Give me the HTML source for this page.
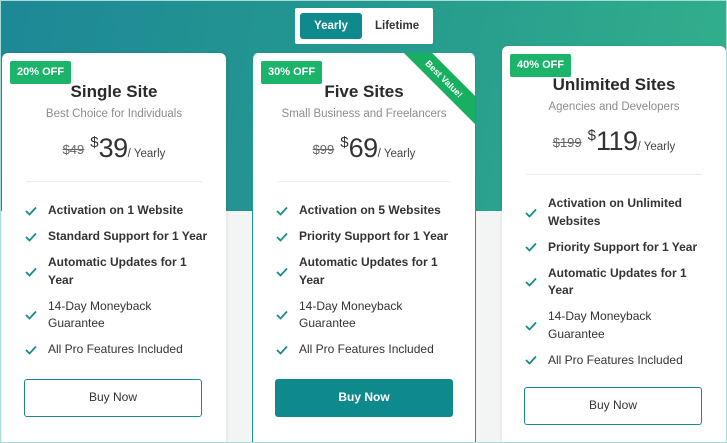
<!DOCTYPE html>
<html><head><style>
*{margin:0;padding:0;box-sizing:border-box}
html,body{width:727px;height:443px;overflow:hidden}
body{font-family:"Liberation Sans",sans-serif;background:#f3f5f5;position:relative}
.frame{position:absolute;left:0;top:0;width:727px;height:443px;border:1.5px solid #a8dcd4;z-index:10;pointer-events:none}
.bg{position:absolute;left:0;top:0;width:727px;height:211px;background:linear-gradient(100deg,#1d8896 0%,#25998f 50%,#32b08b 100%)}
.tog{position:absolute;left:295px;top:8px;width:138px;height:36px;background:#fff;border-radius:2px}
.tog .y{position:absolute;left:5px;top:5px;width:62px;height:26px;background:#0f8a8c;border-radius:3px;color:#fff;font-size:11.5px;font-weight:bold;text-align:center;line-height:26px}
.tog .l{position:absolute;left:80px;top:5px;line-height:26px;font-size:11.5px;font-weight:bold;color:#333}
.card{position:absolute;width:224px;background:#fff;border-radius:6px 6px 0 0;overflow:hidden}
.c1{left:2px;top:53px;height:390px;box-shadow:1px 0 3px rgba(0,0,0,.08)}
.c2{left:252px;top:53px;height:390px;border:1.5px solid #1a9a95;border-top:none;border-bottom:none}
.c3{left:502px;top:46px;height:397px;box-shadow:-1px 0 3px rgba(0,0,0,.06)}
.badge{position:absolute;left:8px;top:8px;background:#1cb46a;color:#fff;font-size:11px;font-weight:bold;padding:0 7px;height:23px;line-height:23px;border-radius:2px}
h2{position:absolute;left:0;right:0;top:29px;text-align:center;font-size:17px;color:#2a2a2a}
.sub{position:absolute;left:0;right:0;top:55px;text-align:center;font-size:11.5px;color:#8c8c8c}
.price{position:absolute;left:0;right:0;top:80px;text-align:center;color:#333;white-space:nowrap}
.price s{font-size:13px;color:#666;margin-right:6px;vertical-align:3px}
.price .d{font-size:15px;vertical-align:10px}
.price b{font-weight:normal;font-size:27px;letter-spacing:-.5px}
.price i{font-style:normal;font-size:11.5px;color:#444}
.hr{position:absolute;left:24px;right:24px;top:128px;height:1px;background:#eee}
ul{position:absolute;left:22px;top:149px;list-style:none;width:195px}
li{position:relative;padding-left:24px;font-size:12px;line-height:17.5px;color:#333;margin-bottom:8.5px;white-space:nowrap}
li.bd{font-weight:bold}
li svg{position:absolute;left:1px;top:50%;margin-top:-5px}
.btn{position:absolute;left:22px;width:178px;height:38px;border:1.5px solid #1a8a8a;border-radius:3px;text-align:center;line-height:35px;font-size:12px;color:#333}
.btn.f{background:#0f8a8c;color:#fff;font-weight:bold;border-color:#0f8a8c}
.rib{position:absolute;right:-34px;top:16px;width:130px;height:20px;background:#17b060;color:#fff;font-size:9px;font-weight:bold;text-align:center;line-height:20px;transform:rotate(45deg)}
</style></head><body>
<div class="bg"></div>
<div class="tog"><div class="y">Yearly</div><div class="l">Lifetime</div></div>

<div class="card c1">
<div class="badge">20% OFF</div>
<h2>Single Site</h2>
<div class="sub">Best Choice for Individuals</div>
<div class="price"><s>$49</s><span class="d">$</span><b>39</b><i>/ Yearly</i></div>
<div class="hr"></div>
<ul>
<li class="bd"><svg width="12" height="10" viewBox="0 0 12 10"><path d="M1 5l3.5 3.5L11 1.5" fill="none" stroke="#178a8a" stroke-width="1.8"/></svg>Activation on 1 Website</li>
<li class="bd"><svg width="12" height="10" viewBox="0 0 12 10"><path d="M1 5l3.5 3.5L11 1.5" fill="none" stroke="#178a8a" stroke-width="1.8"/></svg>Standard Support for 1 Year</li>
<li class="bd"><svg width="12" height="10" viewBox="0 0 12 10"><path d="M1 5l3.5 3.5L11 1.5" fill="none" stroke="#178a8a" stroke-width="1.8"/></svg>Automatic Updates for 1<br>Year</li>
<li><svg width="12" height="10" viewBox="0 0 12 10"><path d="M1 5l3.5 3.5L11 1.5" fill="none" stroke="#178a8a" stroke-width="1.8"/></svg>14-Day Moneyback<br>Guarantee</li>
<li><svg width="12" height="10" viewBox="0 0 12 10"><path d="M1 5l3.5 3.5L11 1.5" fill="none" stroke="#178a8a" stroke-width="1.8"/></svg>All Pro Features Included</li>
</ul>
<div class="btn" style="top:326px">Buy Now</div>
</div>

<div class="card c2">
<div class="rib">Best Value!</div>
<div class="badge">30% OFF</div>
<h2>Five Sites</h2>
<div class="sub">Small Business and Freelancers</div>
<div class="price"><s>$99</s><span class="d">$</span><b>69</b><i>/ Yearly</i></div>
<div class="hr"></div>
<ul>
<li class="bd"><svg width="12" height="10" viewBox="0 0 12 10"><path d="M1 5l3.5 3.5L11 1.5" fill="none" stroke="#178a8a" stroke-width="1.8"/></svg>Activation on 5 Websites</li>
<li class="bd"><svg width="12" height="10" viewBox="0 0 12 10"><path d="M1 5l3.5 3.5L11 1.5" fill="none" stroke="#178a8a" stroke-width="1.8"/></svg>Priority Support for 1 Year</li>
<li class="bd"><svg width="12" height="10" viewBox="0 0 12 10"><path d="M1 5l3.5 3.5L11 1.5" fill="none" stroke="#178a8a" stroke-width="1.8"/></svg>Automatic Updates for 1<br>Year</li>
<li><svg width="12" height="10" viewBox="0 0 12 10"><path d="M1 5l3.5 3.5L11 1.5" fill="none" stroke="#178a8a" stroke-width="1.8"/></svg>14-Day Moneyback<br>Guarantee</li>
<li><svg width="12" height="10" viewBox="0 0 12 10"><path d="M1 5l3.5 3.5L11 1.5" fill="none" stroke="#178a8a" stroke-width="1.8"/></svg>All Pro Features Included</li>
</ul>
<div class="btn f" style="top:326px">Buy Now</div>
</div>

<div class="card c3">
<div class="badge">40% OFF</div>
<h2>Unlimited Sites</h2>
<div class="sub">Agencies and Developers</div>
<div class="price"><s>$199</s><span class="d">$</span><b>119</b><i>/ Yearly</i></div>
<div class="hr"></div>
<ul>
<li class="bd"><svg width="12" height="10" viewBox="0 0 12 10"><path d="M1 5l3.5 3.5L11 1.5" fill="none" stroke="#178a8a" stroke-width="1.8"/></svg>Activation on Unlimited<br>Websites</li>
<li class="bd"><svg width="12" height="10" viewBox="0 0 12 10"><path d="M1 5l3.5 3.5L11 1.5" fill="none" stroke="#178a8a" stroke-width="1.8"/></svg>Priority Support for 1 Year</li>
<li class="bd"><svg width="12" height="10" viewBox="0 0 12 10"><path d="M1 5l3.5 3.5L11 1.5" fill="none" stroke="#178a8a" stroke-width="1.8"/></svg>Automatic Updates for 1<br>Year</li>
<li><svg width="12" height="10" viewBox="0 0 12 10"><path d="M1 5l3.5 3.5L11 1.5" fill="none" stroke="#178a8a" stroke-width="1.8"/></svg>14-Day Moneyback<br>Guarantee</li>
<li><svg width="12" height="10" viewBox="0 0 12 10"><path d="M1 5l3.5 3.5L11 1.5" fill="none" stroke="#178a8a" stroke-width="1.8"/></svg>All Pro Features Included</li>
</ul>
<div class="btn" style="top:341px">Buy Now</div>
</div>
<div class="frame"></div>
</body></html>
